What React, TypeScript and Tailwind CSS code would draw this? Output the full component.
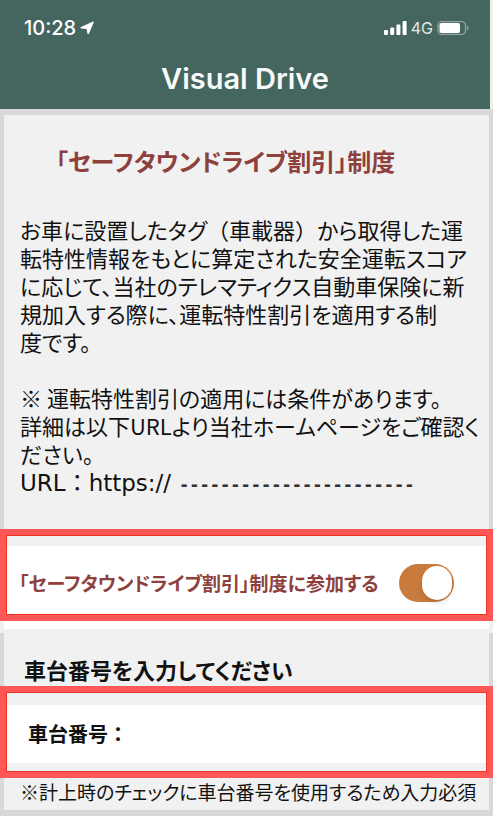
import { useState } from 'react';

const DESCRIPTION = [
  'お車に設置したタグ（車載器）から取得した運',
  '転特性情報をもとに算定された安全運転スコア',
  'に応じて、当社のテレマティクス自動車保険に新',
  '規加入する際に、運転特性割引を適用する制',
  '度です。',
];

const CONDITIONS = [
  '※ 運転特性割引の適用には条件があります。',
  '詳細は以下URLより当社ホームページをご確認く',
  'ださい。',
];

function StatusBar() {
  return (
    <div className="flex items-center justify-between pl-6 pr-5 pt-4 text-white">
      <div className="flex items-center gap-1">
        <span className="text-[20px] leading-6 font-medium">10:28</span>
        <svg className="h-[14px] w-[14px]" viewBox="0 0 14 14" fill="currentColor" aria-hidden="true">
          <path d="M13.2 0.6Q14 0.4 13.8 1.2L9 12.6Q8.2 14 7.4 12.6L6.6 8 1.2 7.4Q-0.4 6.8 1 6Z" />
        </svg>
      </div>
      <div className="flex items-center gap-1">
        <svg className="h-[14px] w-[23px]" viewBox="0 0 23 14" fill="currentColor" aria-hidden="true">
          <rect x="0" y="9" width="4" height="5" rx="1" />
          <rect x="6.2" y="6.5" width="4" height="7.5" rx="1" />
          <rect x="12.4" y="3.5" width="4" height="10.5" rx="1" />
          <rect x="18.6" y="0" width="4" height="14" rx="1" />
        </svg>
        <span className="text-base leading-6 text-[#e3e9e7]">4G</span>
        <svg className="h-[14px] w-[33px]" viewBox="0 0 33 14" fill="none" aria-hidden="true">
          <rect x="1" y="0.7" width="27.5" height="12.6" rx="3.5" stroke="#8fa39f" strokeWidth="1.3" />
          <rect x="2.5" y="2" width="20.5" height="10" rx="2" fill="#fff" />
          <path d="M30 4.8c2.2.8 2.2 3.6 0 4.4Z" fill="#8fa39f" />
        </svg>
      </div>
    </div>
  );
}

// Kana are set proportionally, round brackets keep their full width
function Lines({ lines }: { lines: string[] }) {
  return (
    <>
      {lines.map(line => (
        <span key={line} className="block whitespace-nowrap">
          {line.split(/([（）])/).map((part, i) =>
            i % 2 ? <span key={i} className="[font-feature-settings:normal]">{part}</span> : part
          )}
        </span>
      ))}
    </>
  );
}

export default function App() {
  const [joined, setJoined] = useState(true);
  const [chassisNumber, setChassisNumber] = useState('');

  return (
    <div className="min-h-screen bg-[#f1f1f1] font-['Noto_Sans_CJK_JP',sans-serif] text-[#111] [font-feature-settings:'palt']">
      <header className="border-r-3 border-[#edf3e4] bg-[#44665f] pb-3 font-['Inter',sans-serif]">
        <StatusBar />
        <h1 className="pt-[21px] text-center text-[29px] leading-9 font-semibold text-[#f8faf9]">Visual Drive</h1>
      </header>

      <main>
        <section className="border-x-4 border-t-6 border-[#d8d8d8] px-4 pb-7">
          <h2 className="pt-7 pl-9 text-[24px] leading-9 font-bold text-[#8e403c]">
            「セーフタウンドライブ割引」制度
          </h2>
          <p className="pt-9 text-[22px] leading-7">
            <Lines lines={DESCRIPTION} />
          </p>
          <p className="pt-7 text-[22px] leading-7">
            <Lines lines={CONDITIONS} />
          </p>
          <p className="flex items-baseline gap-2 text-[23px] leading-8 [font-feature-settings:normal]">
            <span className="font-['DejaVu_Sans','Noto_Sans_CJK_JP',sans-serif]">URL：https://</span>
            <span className="font-['DejaVu_Sans_Mono',monospace] text-[17px] font-bold text-[#333]">-----------------------</span>
          </p>
        </section>

        <div className="border-6 border-[#ff5757]">
          <label className="flex h-20 items-center justify-between border border-[#f03223] bg-white pt-5 pr-8 pb-1 pl-3 shadow-[inset_0_10px_0_#f1f1f1]">
            <span className="text-[19px] leading-7 font-bold whitespace-nowrap text-[#8e403c]">
              「セーフタウンドライブ割引」制度に参加する
            </span>
            <input
              type="checkbox"
              role="switch"
              checked={joined}
              onChange={e => setJoined(e.target.checked)}
              className="flex h-[38px] w-[55px] shrink-0 appearance-none items-center rounded-full bg-gray-300 px-[2px] before:h-[34px] before:w-[30px] before:rounded-full before:bg-white before:shadow-md checked:justify-end checked:bg-[#c97a3d]"
            />
          </label>
        </div>

        <section>
          <div className="mx-1 h-2 bg-white" />
          <div className="h-1" />
          <h3 className="border-x-4 border-[#d8d8d8] pt-[22px] pb-[3px] pl-5 text-[22px] leading-7 font-bold">
            車台番号を入力してください
          </h3>
        </section>

        <div className="border-6 border-[#ff5757]">
          <div className="border border-[#f03223] pt-3 pb-2">
            <div className="flex h-[58px] items-center bg-white pl-5">
              <label htmlFor="chassis" className="pl-px text-[20px] leading-7 font-bold whitespace-nowrap [font-feature-settings:normal]">
                車台番号：
              </label>
              <input
                id="chassis"
                type="text"
                value={chassisNumber}
                onChange={e => setChassisNumber(e.target.value)}
                className="h-full min-w-0 flex-1 bg-transparent px-2 text-[20px] outline-none"
              />
            </div>
          </div>
        </div>

        <p className="border-x-4 border-b-6 border-[#d8d8d8] pb-1 pl-4 text-[19px] leading-7 whitespace-nowrap">
          ※計上時のチェックに車台番号を使用するため入力必須
        </p>
      </main>
    </div>
  );
}
